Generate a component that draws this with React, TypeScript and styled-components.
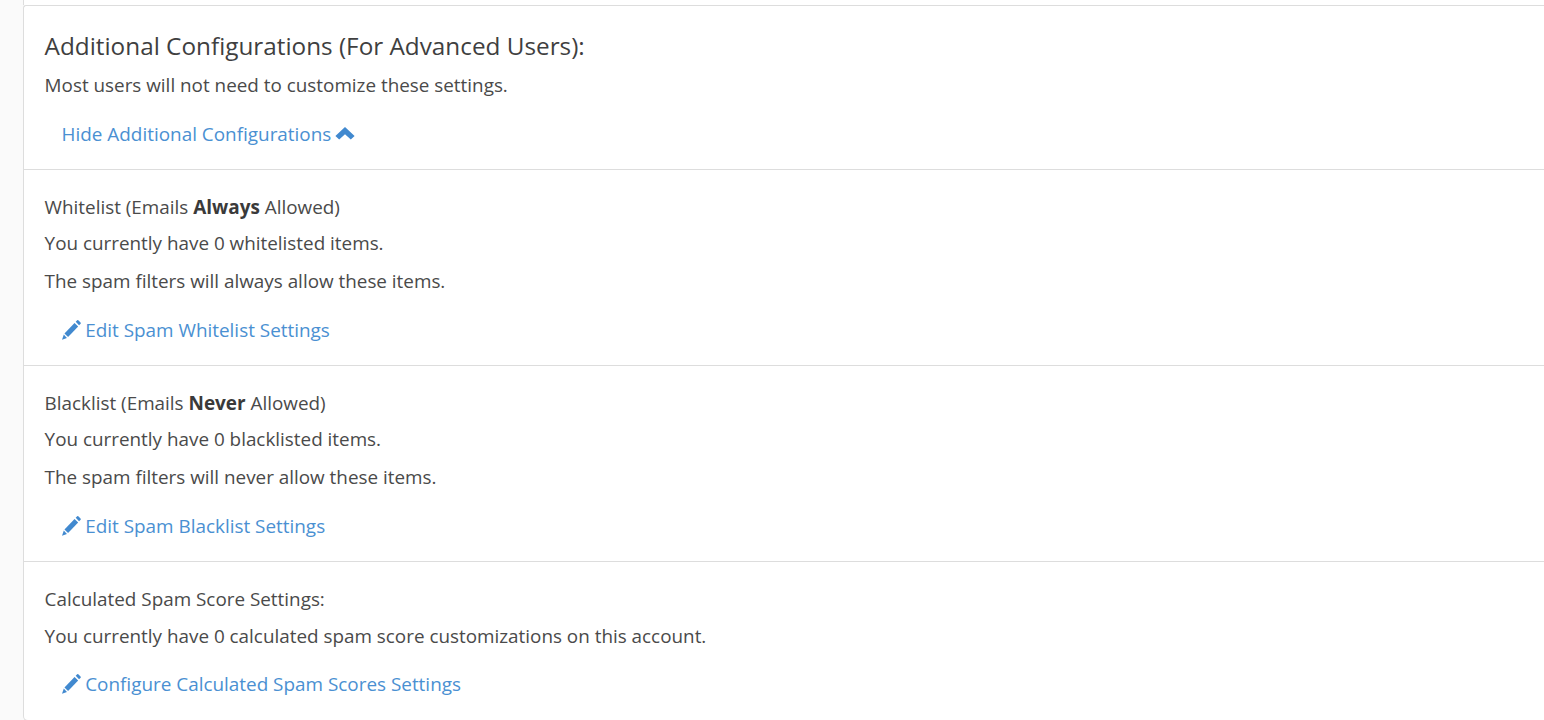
import React from "react";
import styled, { createGlobalStyle } from "styled-components";

const Global = createGlobalStyle`
  html, body { margin: 0; padding: 0; background: #fafafa; overflow: hidden; }
  body { font-family: "Open Sans", "Liberation Sans", sans-serif; color: #4a4a4a; }
`;

const Page = styled.div`
  width: 1544px;
  height: 720px;
  padding-left: 23px;
  box-sizing: border-box;
  overflow: hidden;
`;

const Stub = styled.div`
  height: 5px;
  background: #fff;
  border-left: 1px solid #ddd;
`;

const Card = styled.div`
  background: #fff;
  border: 1px solid #ddd;
  border-right: 0;
  border-radius: 3px 0 0 5px;
  height: 716px;
  box-sizing: border-box;
`;

const Row = styled.section<{ $h: number }>`
  height: ${(p) => p.$h}px;
  box-sizing: border-box;
  padding: 0 0 0 20.6px;
  & + & { border-top: 1px solid #ddd; }
`;

const Heading = styled.h3`
  margin: 0;
  padding-top: 24px;
  font-size: 24.3px;
  line-height: 32px;
  font-weight: 400;
  color: #3f3f3f;
`;

const Label = styled.div`
  padding-top: 24px;
  font-size: 18.88px;
  line-height: 26px;
  margin-bottom: 10px;
  b { font-weight: 700; font-size: 18.95px; color: #3a3a3a; }
`;

const Text = styled.p<{ $top?: number }>`
  margin: ${(p) => p.$top ?? 0}px 0 12px;
  font-size: 18.88px;
  line-height: 26px;
`;

const Action = styled.a<{ $top?: number }>`
  display: flex;
  align-items: center;
  gap: 4.6px;
  margin: ${(p) => p.$top ?? 23}px 0 0 17px;
  height: 26px;
  font-size: 18.9px;
  line-height: 26px;
  color: #4a90d2;
  text-decoration: none;
`;

const Icon = styled.svg`
  flex: none;
  fill: #4189cf;
`;

const ChevronIcon = styled(Icon)`
  margin-left: -1px;
`;

const Pencil = () => (
  <Icon width="19" height="20" viewBox="0 0 20 20" preserveAspectRatio="none" aria-hidden="true">
    <path d="M14.4 1.7 L16 0.2 Q16.6 -0.2 17.2 0.3 L19.5 2.6 Q20 3.2 19.6 3.8 L18 5.3 Z" />
    <path d="M13.2 2.9 L17 6.5 L6.4 17.1 L2.6 13.4 Z" />
    <path d="M1.9 14.6 L5.2 17.9 L0 19.8 Z" />
  </Icon>
);

const Chevron = () => (
  <ChevronIcon width="20" height="16" viewBox="0 0 20 16" aria-hidden="true">
    <path d="M10 1 L19.6 10 L15.8 13.6 L10 8.2 L4.2 13.6 L0.4 10 Z" />
  </ChevronIcon>
);

export default function App() {
  return (
    <Page>
      <Global />
      <Stub />
      <Card>
        <Row $h={163}>
          <Heading>Additional Configurations (For Advanced Users):</Heading>
          <Text $top={10}>Most users will not need to customize these settings.</Text>
          <Action href="#">Hide Additional Configurations <Chevron /></Action>
        </Row>
        <Row $h={196}>
          <Label>Whitelist (Emails <b>Always</b> Allowed)</Label>
          <Text>You currently have 0 whitelisted items.</Text>
          <Text>The spam filters will always allow these items.</Text>
          <Action href="#"><Pencil />Edit Spam Whitelist Settings</Action>
        </Row>
        <Row $h={196}>
          <Label>Blacklist (Emails <b>Never</b> Allowed)</Label>
          <Text>You currently have 0 blacklisted items.</Text>
          <Text>The spam filters will never allow these items.</Text>
          <Action href="#"><Pencil />Edit Spam Blacklist Settings</Action>
        </Row>
        <Row $h={158}>
          <Label>Calculated Spam Score Settings:</Label>
          <Text $top={11}>You currently have 0 calculated spam score customizations on this account.</Text>
          <Action href="#" $top={22}><Pencil />Configure Calculated Spam Scores Settings</Action>
        </Row>
      </Card>
    </Page>
  );
}
